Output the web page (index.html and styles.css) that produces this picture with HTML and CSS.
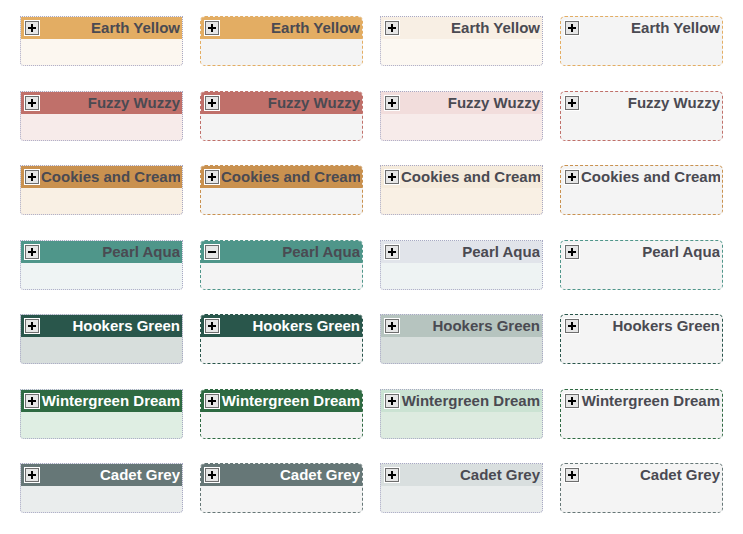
FILE: index.html
```html
<!DOCTYPE html>
<html>
<head>
<meta charset="utf-8">
<link rel="stylesheet" href="styles.css">
</head>
<body>
<div class="grid">
  <div class="card v1 earth"><div class="hd"><span class="tg"><i class="h"></i><i class="v"></i></span><span class="tt">Earth Yellow</span></div></div>
  <div class="card v2 earth"><div class="hd"><span class="tg"><i class="h"></i><i class="v"></i></span><span class="tt">Earth Yellow</span></div></div>
  <div class="card v3 earth"><div class="hd"><span class="tg"><i class="h"></i><i class="v"></i></span><span class="tt">Earth Yellow</span></div></div>
  <div class="card v4 earth"><div class="hd"><span class="tg"><i class="h"></i><i class="v"></i></span><span class="tt">Earth Yellow</span></div></div>

  <div class="card v1 fuzzy"><div class="hd"><span class="tg"><i class="h"></i><i class="v"></i></span><span class="tt">Fuzzy Wuzzy</span></div></div>
  <div class="card v2 fuzzy"><div class="hd"><span class="tg"><i class="h"></i><i class="v"></i></span><span class="tt">Fuzzy Wuzzy</span></div></div>
  <div class="card v3 fuzzy"><div class="hd"><span class="tg"><i class="h"></i><i class="v"></i></span><span class="tt">Fuzzy Wuzzy</span></div></div>
  <div class="card v4 fuzzy"><div class="hd"><span class="tg"><i class="h"></i><i class="v"></i></span><span class="tt">Fuzzy Wuzzy</span></div></div>

  <div class="card v1 cookies"><div class="hd"><span class="tg"><i class="h"></i><i class="v"></i></span><span class="tt">Cookies and Cream</span></div></div>
  <div class="card v2 cookies"><div class="hd"><span class="tg"><i class="h"></i><i class="v"></i></span><span class="tt">Cookies and Cream</span></div></div>
  <div class="card v3 cookies"><div class="hd"><span class="tg"><i class="h"></i><i class="v"></i></span><span class="tt">Cookies and Cream</span></div></div>
  <div class="card v4 cookies"><div class="hd"><span class="tg"><i class="h"></i><i class="v"></i></span><span class="tt">Cookies and Cream</span></div></div>

  <div class="card v1 pearl"><div class="hd"><span class="tg"><i class="h"></i><i class="v"></i></span><span class="tt">Pearl Aqua</span></div></div>
  <div class="card v2 pearl"><div class="hd"><span class="tg"><i class="h"></i></span><span class="tt">Pearl Aqua</span></div></div>
  <div class="card v3 pearl"><div class="hd"><span class="tg"><i class="h"></i><i class="v"></i></span><span class="tt">Pearl Aqua</span></div></div>
  <div class="card v4 pearl"><div class="hd"><span class="tg"><i class="h"></i><i class="v"></i></span><span class="tt">Pearl Aqua</span></div></div>

  <div class="card v1 hookers dark"><div class="hd"><span class="tg"><i class="h"></i><i class="v"></i></span><span class="tt">Hookers Green</span></div></div>
  <div class="card v2 hookers dark"><div class="hd"><span class="tg"><i class="h"></i><i class="v"></i></span><span class="tt">Hookers Green</span></div></div>
  <div class="card v3 hookers"><div class="hd"><span class="tg"><i class="h"></i><i class="v"></i></span><span class="tt">Hookers Green</span></div></div>
  <div class="card v4 hookers"><div class="hd"><span class="tg"><i class="h"></i><i class="v"></i></span><span class="tt">Hookers Green</span></div></div>

  <div class="card v1 winter dark"><div class="hd"><span class="tg"><i class="h"></i><i class="v"></i></span><span class="tt">Wintergreen Dream</span></div></div>
  <div class="card v2 winter dark"><div class="hd"><span class="tg"><i class="h"></i><i class="v"></i></span><span class="tt">Wintergreen Dream</span></div></div>
  <div class="card v3 winter"><div class="hd"><span class="tg"><i class="h"></i><i class="v"></i></span><span class="tt">Wintergreen Dream</span></div></div>
  <div class="card v4 winter"><div class="hd"><span class="tg"><i class="h"></i><i class="v"></i></span><span class="tt">Wintergreen Dream</span></div></div>

  <div class="card v1 cadet dark"><div class="hd"><span class="tg"><i class="h"></i><i class="v"></i></span><span class="tt">Cadet Grey</span></div></div>
  <div class="card v2 cadet dark"><div class="hd"><span class="tg"><i class="h"></i><i class="v"></i></span><span class="tt">Cadet Grey</span></div></div>
  <div class="card v3 cadet"><div class="hd"><span class="tg"><i class="h"></i><i class="v"></i></span><span class="tt">Cadet Grey</span></div></div>
  <div class="card v4 cadet"><div class="hd"><span class="tg"><i class="h"></i><i class="v"></i></span><span class="tt">Cadet Grey</span></div></div>
</div>
</body>
</html>
```

FILE: styles.css
```css
html, body {
  margin: 0;
  padding: 0;
  background: #ffffff;
}
body {
  font-family: "Liberation Sans", Arial, sans-serif;
}
.grid {
  display: grid;
  grid-template-columns: repeat(4, 163px);
  grid-auto-rows: 50px;
  column-gap: 17px;
  row-gap: 24.5px;
  padding: 16px 0 0 20px;
}

.earth   { --c: #e3ad63; --t1: #fcf7f0; --h3: #f8efe4; --b3: #fcf8f2; }
.fuzzy   { --c: #c0706a; --t1: #f7ebea; --h3: #f2dddc; --b3: #f7ebea; }
.cookies { --c: #c9914f; --t1: #f9f0e4; --h3: #f5ebdc; --b3: #f9f0e4; }
.pearl   { --c: #4f968a; --t1: #eff4f4; --h3: #e1e4ea; --b3: #eef3f3; }
.hookers { --c: #29564b; --t1: #d7dedc; --h3: #b6c4bf; --b3: #d7dedc; }
.winter  { --c: #2e6a42; --t1: #dfeee3; --h3: #cbe3d3; --b3: #ddebe0; }
.cadet   { --c: #667777; --t1: #eaeded; --h3: #d9dfdf; --b3: #eaeded; }

.card {
  box-sizing: border-box;
  overflow: hidden;
  color: #4a4a52;
}
.hd {
  height: 22px;
  display: flex;
  align-items: center;
  padding: 0 2px 0 3px;
  overflow: hidden;
}
.tt {
  flex: 1;
  min-width: 0;
  text-align: right;
  white-space: nowrap;
  font-weight: bold;
  font-size: 15px;
  line-height: 22px;
  overflow: hidden;
}
.dark .tt { color: #ffffff; }

.tg {
  position: relative;
  flex: none;
  box-sizing: border-box;
  width: 14px;
  height: 14px;
  border: 1px solid #6e6e6e;
  background: #e6e6e6;
  box-shadow: 0 0 0 1px #ffffff;
  margin-left: 1px;
  margin-right: 2px;
}
.tg .h {
  position: absolute;
  left: 2px;
  top: 5px;
  width: 8px;
  height: 2px;
  background: #000;
}
.tg .v {
  position: absolute;
  left: 5px;
  top: 2px;
  width: 2px;
  height: 8px;
  background: #000;
}

/* variant 1: solid header, tinted body, dotted grey border */
.v1 {
  border: 1px dotted #a8a8c4;
  border-radius: 0 0 4px 4px;
  background: var(--t1);
}
.v1 .hd { background: var(--c); }

/* variant 2: solid header, grey body, dashed colour border */
.v2 {
  border: 1px dashed var(--c);
  border-radius: 5px;
  background: #f4f4f4;
}
.v2 .hd { background: var(--c); }

/* variant 3: pale header, tinted body, dotted grey border */
.v3 {
  border: 1px dotted #a8a8c4;
  border-radius: 0 0 4px 4px;
  background: var(--b3);
}
.v3 .hd { background: var(--h3); }

/* variant 4: no header fill, grey body, dashed colour border */
.v4 {
  border: 1px dashed var(--c);
  border-radius: 5px;
  background: #f4f4f4;
}
```
